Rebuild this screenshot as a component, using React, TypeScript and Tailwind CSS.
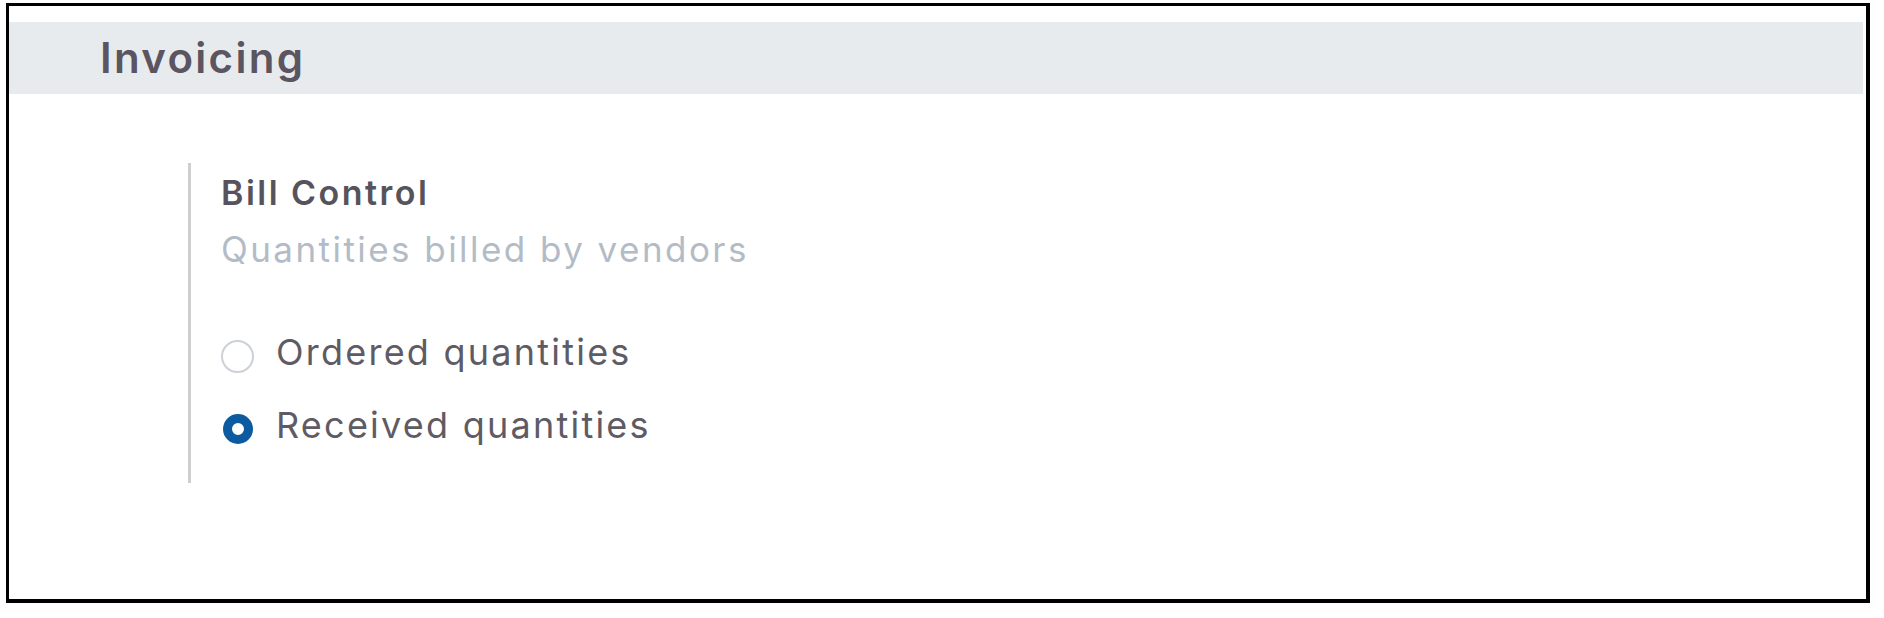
import React from "react";

const options = [
  { label: "Ordered quantities", checked: false },
  { label: "Received quantities", checked: true },
];

function Radio({ checked }: { checked: boolean }) {
  if (checked) {
    return (
      <span className="mt-[11px] ml-[2px] mr-[23px] block h-[30px] w-[30px] shrink-0 rounded-full border-[9px] border-[#0c5aa0] bg-white" />
    );
  }
  return (
    <span className="mt-[10px] mr-[22px] block h-[33px] w-[33px] shrink-0 rounded-full border-2 border-[#ccd1d7] bg-white" />
  );
}

export default function App() {
  return (
    <div
      className="h-[618px] w-[1884px] bg-white pt-[3px] pl-[6px]"
      style={{ fontFamily: "Inter, 'Open Sans', sans-serif" }}
    >
      <div className="h-[600px] w-[1864px] border-[3px] border-r-4 border-b-4 border-black bg-white">
        {/* section header */}
        <div className="mt-[16px] mr-[3px] flex h-[72px] items-center bg-[#e8ebed] pl-[91px]">
          <h2 className="text-[42px] leading-[48px] font-semibold tracking-[0.055em] text-[#5a5560]">
            Invoicing
          </h2>
        </div>

        <div className="mt-[69px] ml-[179px] w-fit border-l-[3px] border-[#cfcfcf] pt-[10px] pb-[36px] pl-[30px]">
          <div className="text-[34px] leading-[40px] font-semibold tracking-[0.073em] text-[#57535c]">
            Bill Control
          </div>
          <div className="mt-[16px] text-[35px] leading-[40px] tracking-[0.07em] text-[#b3bcc6]">
            Quantities billed by vendors
          </div>

          <div className="mt-[61px] flex flex-col gap-[29px]">
            {options.map((opt) => (
              <label key={opt.label} className="flex items-start">
                <Radio checked={opt.checked} />
                <span className="text-[36px] leading-[44px] tracking-[0.062em] text-[#5f5b64]">
                  {opt.label}
                </span>
              </label>
            ))}
          </div>
        </div>
      </div>
    </div>
  );
}
